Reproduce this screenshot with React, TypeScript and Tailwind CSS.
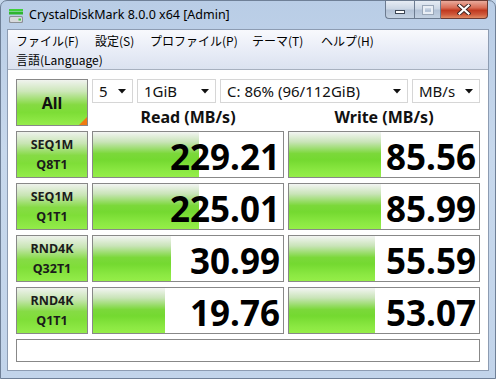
import React from "react";

const rows = [
  { l1: "SEQ1M", l2: "Q8T1", r: "229.21", rw: 106, w: "85.56", ww: 92 },
  { l1: "SEQ1M", l2: "Q1T1", r: "225.01", rw: 106, w: "85.99", ww: 92 },
  { l1: "RND4K", l2: "Q32T1", r: "30.99", rw: 78, w: "55.59", ww: 86 },
  { l1: "RND4K", l2: "Q1T1", r: "19.76", rw: 72, w: "53.07", ww: 86 },
];

const sans = { fontFamily: '"Noto Sans", "Noto Sans CJK JP", sans-serif' };
const jp = { fontFamily: '"Noto Sans CJK JP", "Noto Sans", sans-serif' };

function Arrow() {
  return (
    <svg width="8" height="5" viewBox="0 0 8 5" className="shrink-0">
      <path d="M0 0 H8 L4 4.5 Z" fill="#111" />
    </svg>
  );
}

function Combo({ w, text }: { w: string; text: string }) {
  return (
    <div
      className={`${w} h-[24px] border border-[#d6d6d6] bg-white flex items-center justify-between pl-[6px] pr-[6px] text-[15px] text-[#111]`}
      style={sans}
    >
      <span className="leading-none">{text}</span>
      <Arrow />
    </div>
  );
}

function ResultBox({ value, bar }: { value: string; bar: number }) {
  return (
    <div className="relative h-[47px] border border-[#888888] bg-white flex items-center justify-end pr-[3px] overflow-hidden">
      <div
        className="absolute left-0 top-0 bottom-0 bg-[linear-gradient(to_bottom,#f3f5f3_0%,#c9e4b8_22%,#7bd83a_48%,#74d930_62%,#8be842_86%,#95ee48_100%)]"
        style={{ width: bar }}
      />
      <span
        className="relative text-[35px] font-bold leading-none text-black mt-[3px]"
        style={sans}
      >
        {value}
      </span>
    </div>
  );
}

function Label({ l1, l2 }: { l1: string; l2: string }) {
  return (
    <div
      className="h-[47px] border border-[#888888] bg-[linear-gradient(to_bottom,#eef2ec_0%,#c8e5b4_25%,#86db45_52%,#7fde38_70%,#93ec4a_100%)] flex flex-col items-center justify-center text-[12.5px] font-bold text-[#1b1b1b] leading-[20px]"
      style={sans}
    >
      <span>{l1}</span>
      <span>{l2}</span>
    </div>
  );
}

export default function App() {
  return (
    <div className="w-[496px] h-[379px] overflow-hidden bg-[#c4d6eb]">
      <div className="w-[496px] h-[379px] rounded-t-[7px] border border-[#6f8097] bg-[linear-gradient(to_bottom,#b9cde6_0%,#c7d8ec_40%,#c2d4ea_100%)] flex flex-col">
        {/* Title bar */}
        <div className="h-[28px] flex shrink-0">
          <div className="flex items-center pl-[7px] pt-[1px]">
            <svg width="16" height="16" viewBox="0 0 16 16">
              <rect x="1" y="1" width="14" height="2.5" fill="#3fcf3a" />
              <rect x="1" y="4" width="14" height="2.5" fill="#2fb52f" />
              <rect x="1" y="8" width="14" height="7" rx="1.5" fill="#8b8f95" />
              <rect x="2" y="9" width="12" height="5" rx="1" fill="#d7d9dc" />
              <rect x="10.5" y="10.5" width="2.5" height="2" fill="#3bd03b" />
            </svg>
            <span className="ml-[5px] text-[12.5px] text-black" style={sans}>
              CrystalDiskMark 8.0.0 x64 [Admin]
            </span>
          </div>
          <div className="ml-auto mr-[7px] flex self-start h-[19px] -mt-[1px]">
            <div className="w-[29px] h-[19px] border border-[#6c7b90] border-r-0 rounded-bl-[4px] bg-[linear-gradient(to_bottom,#e6ecf4_0%,#ccd7e5_45%,#b3c2d6_55%,#c3d1e2_100%)] flex items-end justify-center pb-[4px]">
              <div className="w-[10px] h-[4px] bg-white border border-[#3d4654]" />
            </div>
            <div className="w-[27px] h-[19px] border border-[#6c7b90] bg-[linear-gradient(to_bottom,#e6ecf4_0%,#ccd7e5_45%,#b3c2d6_55%,#c3d1e2_100%)] flex items-center justify-center">
              <div className="w-[10px] h-[8px] border-[2px] border-[#e9eef5] outline outline-1 outline-[#9aa7b8]" />
            </div>
            <div className="w-[47px] h-[19px] border border-[#6c3a33] border-l-0 rounded-br-[4px] bg-[linear-gradient(to_bottom,#e9ab9c_0%,#d86c55_40%,#c0391f_55%,#cf5a3c_80%,#e08a63_100%)] flex items-center justify-center">
              <svg width="14" height="11" viewBox="0 0 14 11">
                <path d="M2.5 1.5 L11.5 9.5 M11.5 1.5 L2.5 9.5" stroke="#3b2320" strokeWidth="4" strokeLinecap="square" />
                <path d="M2.5 1.5 L11.5 9.5 M11.5 1.5 L2.5 9.5" stroke="#ffffff" strokeWidth="2.2" strokeLinecap="square" />
              </svg>
            </div>
          </div>
        </div>

        {/* Inner */}
        <div className="mx-[6px] border border-[#8d9cb2] flex flex-col bg-white">
          {/* Menu */}
          <div
            className="h-[40px] border-b border-[#a7b0bf] bg-[linear-gradient(to_bottom,#f8f9fd_0%,#e9edf7_50%,#dbe2f0_100%)] pl-[8px] pt-[1px] text-[12px] text-black"
            style={jp}
          >
            <div className="h-[19px] flex items-center">
              <span className="w-[79px]">ファイル(F)</span>
              <span className="w-[55px]">設定(S)</span>
              <span className="w-[102px]">プロファイル(P)</span>
              <span className="w-[69px]">テーマ(T)</span>
              <span>ヘルプ(H)</span>
            </div>
            <div className="h-[19px] flex items-center">
              <span>言語(Language)</span>
            </div>
          </div>

          {/* Client */}
          <div className="h-[300px] bg-white pl-[8px] pr-[8px] pt-[9px] flex flex-col gap-[5px]">
            <div className="flex gap-[4px] h-[47px]">
              <div className="relative w-[72px] h-[47px] border border-[#888888] bg-[linear-gradient(to_bottom,#f0f3ee_0%,#cde7ba_25%,#85da42_55%,#7ddd36_72%,#95ec4b_100%)] flex items-center justify-center overflow-hidden">
                <span className="text-[16px] font-bold text-[#111]" style={sans}>
                  All
                </span>
                <div className="absolute right-0 bottom-0 w-0 h-0 border-l-[8px] border-l-transparent border-b-[8px] border-b-[#f07a10]" />
              </div>
              <div className="flex flex-col w-[388px]">
                <div className="flex gap-[4px] h-[24px]">
                  <Combo w="w-[41px]" text="5" />
                  <Combo w="w-[79px]" text="1GiB" />
                  <Combo w="w-[188px]" text="C: 86% (96/112GiB)" />
                  <Combo w="w-[68px]" text="MB/s" />
                </div>
                <div className="grid grid-cols-[192px_192px] gap-x-[4px] h-[23px]">
                  <div className="flex items-end justify-center text-[16px] font-bold text-[#111] leading-[18px]" style={sans}>
                    Read (MB/s)
                  </div>
                  <div className="flex items-end justify-center text-[16px] font-bold text-[#111] leading-[18px]" style={sans}>
                    Write (MB/s)
                  </div>
                </div>
              </div>
            </div>
            {rows.map((r) => (
              <div key={r.l1 + r.l2} className="grid grid-cols-[72px_192px_192px] gap-x-[4px]">
                <Label l1={r.l1} l2={r.l2} />
                <ResultBox value={r.r} bar={r.rw} />
                <ResultBox value={r.w} bar={r.ww} />
              </div>
            ))}
            <div className="h-[23px] border border-[#888888] bg-white" />
          </div>
        </div>
      </div>
    </div>
  );
}
